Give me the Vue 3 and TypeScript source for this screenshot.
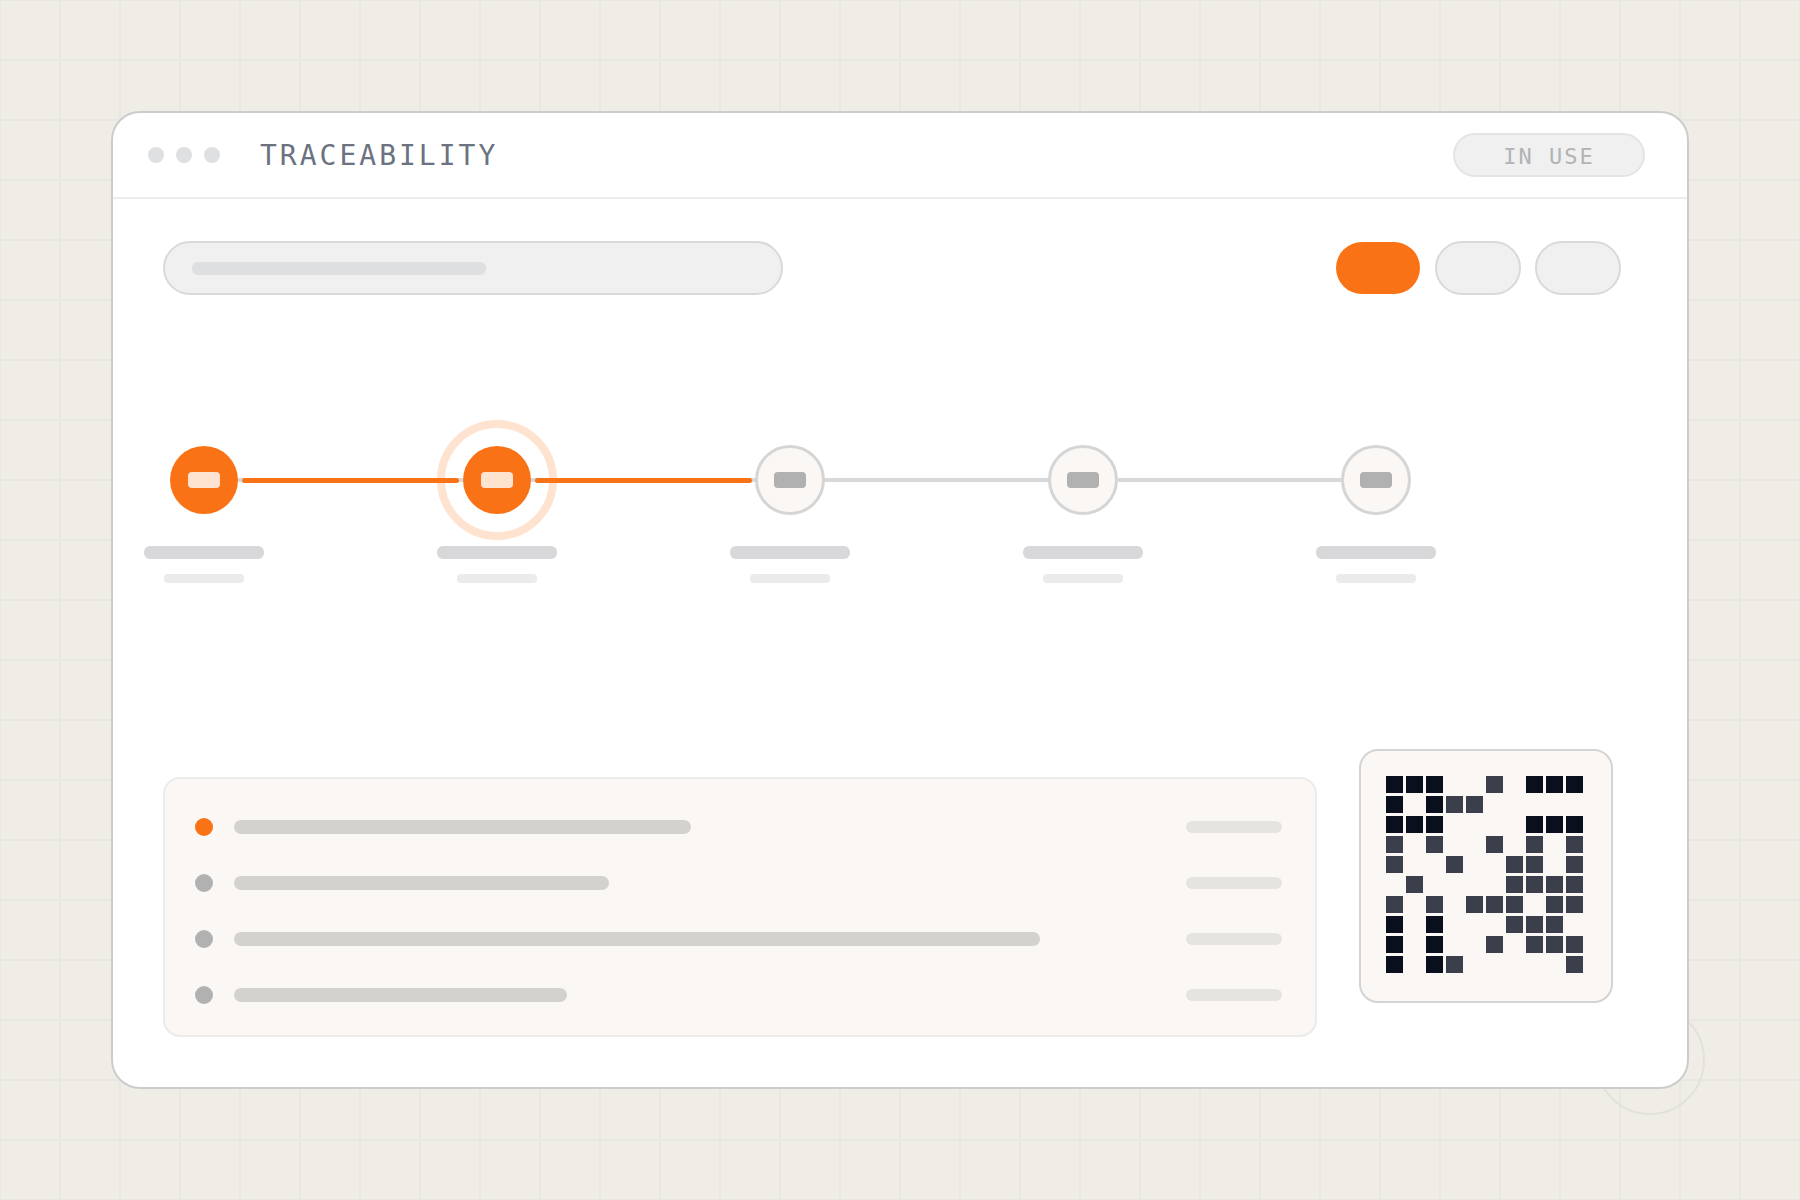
<script setup lang="ts">
type StepState = 'done' | 'active' | 'pending'

interface LogEntry {
  width: number
  current: boolean
}

const steps: StepState[] = ['done', 'active', 'pending', 'pending', 'pending']

// Bar length of each log entry, in percent of the text column
const entries: LogEntry[] = [
  { width: 48, current: true },
  { width: 39.4, current: false },
  { width: 84.7, current: false },
  { width: 35, current: false },
]

// # finder module, o data module, . empty
const code: string[] = [
  '###..o.###',
  '#.#oo.....',
  '###....###',
  'o.o..o.o.o',
  'o..o..oo.o',
  '.o....oooo',
  'o.o.ooo.oo',
  '#.#...ooo.',
  '#.#..o.ooo',
  '#.#o.....o',
]
const cells: string[] = code.join('').split('')
</script>

<template>
  <div class="page">
    <div class="halo"></div>
    <main class="window">
      <header class="titlebar">
        <div class="dots"><i></i><i></i><i></i></div>
        <h1 class="title">TRACEABILITY</h1>
        <span class="status">IN USE</span>
      </header>

      <div class="toolbar">
        <label class="search">
          <span class="search-hint"></span>
          <input type="search" aria-label="Search" />
        </label>
        <div class="chips">
          <button type="button" class="chip selected" aria-label="All"></button>
          <button type="button" class="chip" aria-label="Open"></button>
          <button type="button" class="chip" aria-label="Closed"></button>
        </div>
      </div>

      <section class="stepper" aria-label="Progress">
        <div class="track">
          <template v-for="(state, i) in steps" :key="i">
            <div v-if="i > 0" class="link"><span v-if="i < 3" class="link-fill"></span></div>
            <div class="node" :class="state"><span class="glyph"></span></div>
          </template>
        </div>
        <div class="labels">
          <div v-for="(state, i) in steps" :key="i" class="label">
            <span class="label-main"></span>
            <span class="label-sub"></span>
          </div>
        </div>
      </section>

      <section class="details">
        <ul class="log">
          <li v-for="(entry, i) in entries" :key="i" class="entry" :class="{ current: entry.current }">
            <span class="bullet"></span>
            <span class="entry-text"><span class="bar" :style="{ width: entry.width + '%' }"></span></span>
            <span class="entry-time"></span>
          </li>
        </ul>
        <div class="code" role="img" aria-label="Code">
          <span
            v-for="(cell, i) in cells"
            :key="i"
            :class="{ finder: cell === '#', data: cell === 'o' }"
          ></span>
        </div>
      </section>
    </main>
  </div>
</template>

<style>
body {
  margin: 0;
}
</style>

<style scoped>
* {
  box-sizing: border-box;
}

.page {
  position: relative;
  min-height: 100vh;
  padding: 111px;
  background-color: #f0ede6;
  background-image:
    linear-gradient(to right, #e9e7e2 2px, transparent 2px),
    linear-gradient(to bottom, #e9e7e2 2px, transparent 2px);
  background-size: 60px 60px;
  background-position: -1px -1px;
}

.halo {
  position: absolute;
  right: 95px;
  bottom: 85px;
  width: 110px;
  height: 110px;
  border: 2px solid #e3e1dd;
  border-radius: 50%;
}

.window {
  position: relative;
  border: 2px solid #cbcccc;
  border-radius: 29px;
  background: #fff;
  overflow: hidden;
}

.titlebar {
  display: flex;
  align-items: center;
  height: 86px;
  padding: 0 42px 0 35px;
  border-bottom: 2px solid #ececec;
}

.dots {
  display: flex;
  gap: 12px;
}

.dots i {
  width: 16px;
  height: 16px;
  border-radius: 50%;
  background: #dfe0e1;
}

.title {
  margin: 0 auto 0 40px;
  padding-top: 2px;
  font: 400 28px/36px 'DejaVu Sans Mono', monospace;
  letter-spacing: 3px;
  color: #6b7280;
}

.status {
  width: 192px;
  height: 44px;
  border: 2px solid #e4e4e5;
  border-radius: 22px;
  background: #f0f0f0;
  font: 400 22px/44px 'DejaVu Sans Mono', monospace;
  letter-spacing: 2px;
  text-align: center;
  color: #b1b3b6;
}

.toolbar {
  display: flex;
  justify-content: space-between;
  align-items: center;
  padding: 42px 66px 0 50px;
}

.search {
  display: flex;
  align-items: center;
  flex: 0 1 620px;
  height: 54px;
  padding: 0 27px;
  border: 2px solid #d9d9da;
  border-radius: 27px;
  background: #f0f0f0;
}

.search-hint {
  flex: none;
  width: 294px;
  height: 13px;
  border-radius: 6px;
  background: #dedfe1;
}

.search input {
  flex: 1;
  min-width: 0;
  border: 0;
  outline: 0;
  background: transparent;
}

.chips {
  display: flex;
  gap: 14px;
}

.chip {
  width: 86px;
  height: 54px;
  padding: 0;
  border: 2px solid #d9d9da;
  border-radius: 27px;
  background: #f0f0f0;
}

.chip.selected {
  width: 84px;
  height: 52px;
  margin: 1px;
  border: 0;
  background: #f97316;
}

.stepper {
  padding: 151px 251px 0 31px;
}

.track {
  display: flex;
  align-items: center;
  padding: 0 26px;
}

.node {
  display: flex;
  align-items: center;
  justify-content: center;
  flex: none;
  width: 68px;
  height: 68px;
  border-radius: 50%;
  background: #f97316;
}

.node.active {
  outline: 8px solid rgba(249, 115, 22, 0.2);
  outline-offset: 18px;
}

.node.pending {
  background: #faf7f4;
  outline: 3px solid #d5d5d5;
  outline-offset: -2px;
}

.glyph {
  width: 32px;
  height: 16px;
  border-radius: 4px;
  background: #fee3d0;
}

.pending .glyph {
  background: #b1b1b1;
}

.link {
  display: flex;
  align-items: center;
  flex: 1;
  height: 4px;
  padding: 0 4px;
  background: #d9d9da;
}

.link-fill {
  flex: 1;
  height: 5px;
  border-radius: 3px;
  background: #f97316;
}

.labels {
  display: flex;
  justify-content: space-between;
  margin-top: 32px;
}

.label {
  display: flex;
  flex-direction: column;
  align-items: center;
  gap: 15px;
  width: 120px;
}

.label-main {
  width: 120px;
  height: 13px;
  border-radius: 6px;
  background: #d8d8da;
}

.label-sub {
  width: 80px;
  height: 9px;
  border-radius: 4px;
  background: #ebebeb;
}

.details {
  display: flex;
  align-items: flex-start;
  gap: 42px;
  padding: 166px 74px 50px 50px;
}

.log {
  display: flex;
  flex-direction: column;
  flex: 1;
  gap: 38px;
  margin: 28px 0 0;
  padding: 39px 33px 31px 30px;
  border: 2px solid #ebebea;
  border-radius: 17px;
  background: #faf7f4;
  list-style: none;
}

.entry {
  display: flex;
  align-items: center;
  height: 18px;
}

.bullet {
  width: 18px;
  height: 18px;
  margin-right: 21px;
  border-radius: 50%;
  background: #b1b1b1;
}

.current .bullet {
  background: #f97316;
}

.entry-text {
  flex: 1;
}

.bar {
  display: block;
  height: 14px;
  border-radius: 7px;
  background: #d4d2cf;
}

.entry-time {
  width: 96px;
  height: 12px;
  border-radius: 6px;
  background: #e5e4e1;
}

.code {
  display: grid;
  grid-template-columns: repeat(10, 17px);
  grid-auto-rows: 17px;
  gap: 3px;
  padding: 25px 28px 28px 25px;
  border: 2px solid #d4d4d4;
  border-radius: 19px;
  background: #faf7f4;
}

.code .finder {
  background: #0a0f1e;
}

.code .data {
  background: #3b3f4b;
}
</style>
